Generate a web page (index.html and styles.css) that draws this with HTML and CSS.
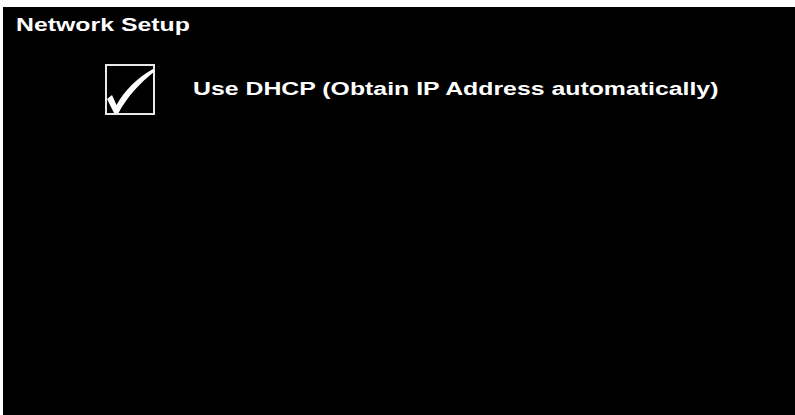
FILE: index.html
```html
<!DOCTYPE html>
<html>
<head>
<meta charset="utf-8">
<link rel="stylesheet" href="styles.css">
</head>
<body>
<div class="screen">
  <div class="title">Network Setup</div>
  <div class="option">
    <div class="checkbox">
      <svg class="check" width="50" height="51" viewBox="0 0 50 51">
        <path d="M2 35 L7 31 L11.5 41 C20 26 32 14 48 5 L49.5 7.5 C35 19 22 33 13.5 49 L9 49 Z" fill="#fff"/>
      </svg>
    </div>
    <div class="label">Use DHCP (Obtain IP Address automatically)</div>
  </div>
</div>
</body>
</html>
```
FILE: styles.css
```css
html, body {
  margin: 0;
  padding: 0;
  background: #fff;
  width: 795px;
  height: 415px;
  overflow: hidden;
}
.screen {
  margin: 7px 0 0 3px;
  width: 792px;
  height: 408px;
  background: #000;
  color: #fff;
  font-family: "Liberation Sans", Arial, sans-serif;
  font-weight: bold;
  box-sizing: border-box;
  padding: 8px 0 0 13px;
  overflow: hidden;
}
.title {
  width: max-content;
  font-size: 18px;
  line-height: 20px;
  transform: scaleX(1.38);
  transform-origin: left center;
}
.option {
  display: flex;
  align-items: center;
  gap: 38px;
  margin: 29px 0 0 89px;
}
.checkbox {
  position: relative;
  width: 46px;
  height: 47px;
  border: 2px solid #e8e8e8;
}
.check {
  position: absolute;
  left: -2px;
  top: -2px;
}
.label {
  width: max-content;
  font-size: 18px;
  line-height: 20px;
  margin-top: -2px;
  transform: scaleX(1.38);
  transform-origin: left center;
}
```
